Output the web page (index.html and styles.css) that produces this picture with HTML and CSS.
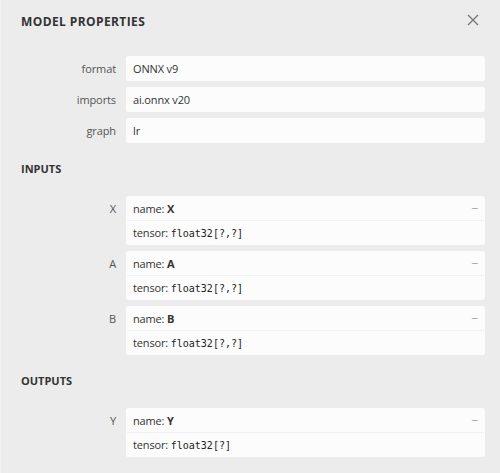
FILE: index.html
```html
<!DOCTYPE html>
<html>
<head>
<meta charset="utf-8">
<link rel="stylesheet" href="styles.css">
</head>
<body>
<div class="sidebar">
  <div class="title-bar">
    <div class="title">MODEL PROPERTIES</div>
    <div class="close">
      <svg width="12" height="12" viewBox="0 0 12 12"><path d="M1 1 L11 11 M11 1 L1 11" stroke="#777" stroke-width="1.4" fill="none"/></svg>
    </div>
  </div>
  <div class="content">
    <div class="item">
      <div class="item-name">format</div>
      <div class="value-list"><div class="value"><div class="line">ONNX v9</div></div></div>
    </div>
    <div class="item">
      <div class="item-name">imports</div>
      <div class="value-list"><div class="value"><div class="line">ai.onnx v20</div></div></div>
    </div>
    <div class="item">
      <div class="item-name">graph</div>
      <div class="value-list"><div class="value"><div class="line">lr</div></div></div>
    </div>

    <div class="header">INPUTS</div>
    <div class="item">
      <div class="item-name">X</div>
      <div class="value-list"><div class="value">
        <div class="expander">−</div>
        <div class="line">name: <b>X</b></div>
        <div class="line line-border">tensor: <code>float32[?,?]</code></div>
      </div></div>
    </div>
    <div class="item">
      <div class="item-name">A</div>
      <div class="value-list"><div class="value">
        <div class="expander">−</div>
        <div class="line">name: <b>A</b></div>
        <div class="line line-border">tensor: <code>float32[?,?]</code></div>
      </div></div>
    </div>
    <div class="item">
      <div class="item-name">B</div>
      <div class="value-list"><div class="value">
        <div class="expander">−</div>
        <div class="line">name: <b>B</b></div>
        <div class="line line-border">tensor: <code>float32[?,?]</code></div>
      </div></div>
    </div>

    <div class="header">OUTPUTS</div>
    <div class="item">
      <div class="item-name">Y</div>
      <div class="value-list"><div class="value">
        <div class="expander">−</div>
        <div class="line">name: <b>Y</b></div>
        <div class="line line-border">tensor: <code>float32[?]</code></div>
      </div></div>
    </div>
  </div>
</div>
</body>
</html>
```
FILE: styles.css
```css
html, body {
  margin: 0;
  padding: 0;
  height: 100%;
}
body {
  background: #ececec;
  font-family: "Open Sans", "Noto Sans", sans-serif;
  font-size: 11px;
  color: #333;
}
.sidebar {
  height: 100%;
  box-sizing: border-box;
  border-left: 1px solid #f1f1f1;
}
.title-bar {
  display: flex;
  justify-content: space-between;
  align-items: flex-start;
  padding: 0 21px 0 20px;
  height: 31px;
}
.title {
  font-weight: bold;
  font-size: 12px;
  letter-spacing: 0.4px;
  line-height: 20px;
  padding-top: 12px;
  color: #333;
}
.close {
  display: flex;
  width: 12px;
  height: 12px;
  padding-top: 14px;
}
.content {
  padding: 22px 15px 0 20px;
}
.item {
  display: flex;
  align-items: flex-start;
}
.item-name {
  flex: 0 0 95px;
  padding-right: 10px;
  padding-top: 8px;
  text-align: right;
  color: #555;
  line-height: 15px;
  letter-spacing: -0.1px;
}
.value-list {
  flex: 1;
  min-width: 0;
}
.value {
  background: #fcfcfc;
  border: 1px solid #fcfcfc;
  border-radius: 2px;
  margin: 3px 0;
  line-height: 15px;
}
.line {
  padding: 4px 6px;
  height: 15px;
  letter-spacing: -0.15px;
  white-space: nowrap;
}
.line-border {
  border-top: 1px solid rgba(27, 31, 35, 0.05);
}
.expander {
  float: right;
  font-family: "DejaVu Sans Mono", monospace;
  color: #aaa;
  padding: 4px 6px;
  height: 15px;
}
code {
  font-family: "DejaVu Sans Mono", "Liberation Mono", monospace;
  font-size: 10px;
  letter-spacing: 0;
  line-height: 0;
  color: #222;
}
.header {
  font-weight: bold;
  font-size: 11px;
  line-height: 1.25;
  margin: 16px 0;
  border-bottom: 1px solid #ececec;
  color: #333;
}
```
